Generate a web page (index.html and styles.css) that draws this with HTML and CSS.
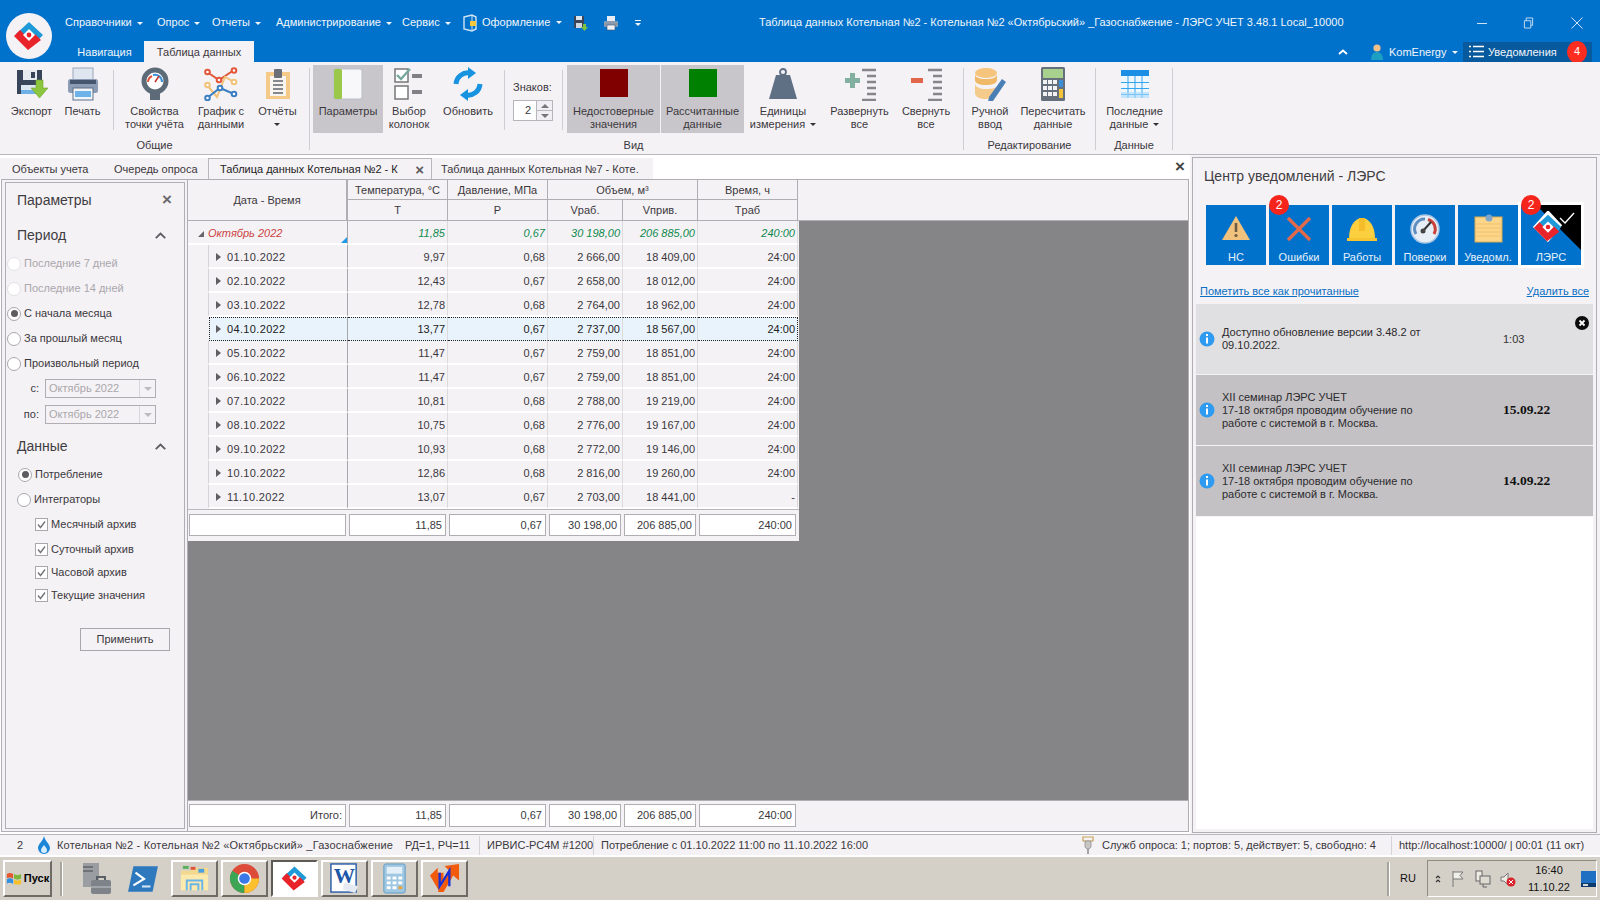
FILE: index.html
```html
<!DOCTYPE html>
<html lang="ru">
<head>
<meta charset="utf-8">
<title>ЛЭРС УЧЕТ</title>
<link rel="stylesheet" href="styles.css">
</head>
<body>
<svg class="defs" width="0" height="0">
  <symbol id="logo" viewBox="0 0 46 46">
    <polygon fill="#1f9ad9" points="23,9 37,22 30,29 23,22 16,28 10,21"/>
    <polygon fill="#e8232a" points="8,23 14,17 23,26 29,21 35,27 22,37"/>
    <polygon fill="#fff" points="23,16 29,22 23,28 17,22"/>
    <circle fill="#e8232a" cx="23" cy="22" r="2.4"/>
  </symbol>
  <symbol id="info" viewBox="0 0 16 16">
    <circle cx="8" cy="8" r="7.5" fill="#2f9bf0"/>
    <rect x="7" y="3" width="2" height="2" fill="#fff"/>
    <rect x="7" y="6.5" width="2" height="6" fill="#fff"/>
  </symbol>
</svg>

<header class="titlebar">
  <div class="logo-wrap"><svg class="logo" viewBox="0 0 46 46"><circle cx="23" cy="23" r="23" fill="#f5f2f6"/><use href="#logo" width="46" height="46"/></svg></div>
  <div class="title-main">
    <div class="title-top">
      <nav class="menu">
        <span class="m m1">Справочники <i class="ar"></i></span>
        <span class="m m2">Опрос <i class="ar"></i></span>
        <span class="m m3">Отчеты <i class="ar"></i></span>
        <span class="m m4">Администрирование <i class="ar"></i></span>
        <span class="m m5">Сервис <i class="ar"></i></span>
        <span class="m m6"><svg class="qa" viewBox="0 0 18 18"><path d="M3 3 L11 1 L15 3 V15 L11 17 L3 15 Z" fill="none" stroke="#cfe4f6" stroke-width="1.4"/><path d="M11 1 V17" stroke="#cfe4f6"/><rect x="9" y="7" width="6" height="5" fill="#f6c83c"/></svg>Оформление <i class="ar"></i></span>
        <svg class="qa qa-save" viewBox="0 0 16 16"><rect x="1" y="1" width="10" height="12" fill="#39465a"/><rect x="3" y="1" width="6" height="4" fill="#dfe6ee"/><rect x="3" y="8" width="6" height="5" fill="#cfd8e2"/><path d="M10 9h3v3h2l-3.500 4L8 12h2z" fill="#7fc241"/></svg>
        <svg class="qa qa-print" viewBox="0 0 16 16"><rect x="4" y="1" width="8" height="5" fill="#e8edf3"/><rect x="1" y="6" width="14" height="6" rx="1" fill="#8c9aae"/><rect x="4" y="10" width="8" height="5" fill="#eef3f8" stroke="#46566e" stroke-width=".6"/></svg>
        <span class="qa-more"><b></b><i class="ar ar-w"></i></span>
      </nav>
      <div class="app-title">Таблица данных Котельная №2 - Котельная №2 «Октябрьский» _Газоснабжение - ЛЭРС УЧЕТ 3.48.1 Local_10000</div>
      <div class="win-btns">
        <svg class="wb" viewBox="0 0 12 12"><path d="M1 6.500H11" stroke="#cfe3f5"/></svg>
        <svg class="wb wb2" viewBox="0 0 12 12"><path d="M1.500 3.500h7v8h-7zM3.500 3.500v-3h7v8h-2" fill="none" stroke="#cfe3f5"/></svg>
        <svg class="wb wb3" viewBox="0 0 12 12"><path d="M.5.500L11.500 11.500M11.500.500L.5 11.500" stroke="#cfe3f5"/></svg>
      </div>
    </div>
    <div class="title-tabs">
      <div class="rt">Навигация</div>
      <div class="rt rt-on">Таблица данных</div>
      <div class="title-right">
        <svg class="coll" viewBox="0 0 10 6"><path d="M1 5L5 1.500L9 5" fill="none" stroke="#fff" stroke-width="1.800"/></svg>
        <svg class="user" viewBox="0 0 14 18"><circle cx="7" cy="5" r="3.600" fill="#f2c08a"/><path d="M1 17C1 11 4 9 7 9s6 2 6 8z" fill="#1d9fc4"/></svg>
        <span class="u-name">KomEnergy <i class="ar"></i></span>
        <div class="notif-btn">
          <svg class="lst" viewBox="0 0 15 13"><path d="M0 1.500h2M4 1.500h11M0 6.500h2M4 6.500h11M0 11.500h2M4 11.500h11" stroke="#fff" stroke-width="1.400"/></svg>
          <span>Уведомления</span>
          <b class="badge">4</b>
        </div>
      </div>
    </div>
  </div>
</header>

<section class="ribbon">
  <div class="rg g1">
    <div class="btns">
      <div class="rb w-exp"><svg class="ic" viewBox="0 0 34 34"><path d="M2 3H27V27H2z" fill="#37445a"/><rect x="8" y="3" width="14" height="10" fill="#e6ebf1"/><rect x="16" y="5" width="4" height="6" fill="#37445a"/><rect x="6" y="18" width="17" height="9" fill="#dce6f0"/><rect x="6" y="23" width="17" height="4" fill="#6fb1e6"/><path d="M21 13h7v8h5L24.500 31 16 21h5z" fill="#8cc63f" stroke="#6fa32e" stroke-width=".6"/></svg><span>Экспорт</span></div>
      <div class="rb w-prn"><svg class="ic" viewBox="0 0 34 34"><rect x="7" y="1" width="20" height="12" fill="#dfe6f0" stroke="#9aa7ba"/><rect x="2" y="12" width="30" height="14" rx="2.500" fill="#8c9cb4"/><rect x="4" y="13" width="26" height="4" fill="#46566e"/><rect x="7" y="21" width="20" height="12" fill="#f2f5f8" stroke="#5e6f88"/><rect x="9" y="24" width="16" height="6" fill="#6db3ea"/></svg><span>Печать</span></div>
    </div>
    <div class="rsep s1"></div>
    <div class="btns">
      <div class="rb w-prop"><svg class="ic" viewBox="0 0 34 34"><circle cx="17" cy="14" r="11" fill="#fff" stroke="#5d6b79" stroke-width="5"/><path d="M10 15a7 7 0 0 1 4-6" fill="none" stroke="#e0533b" stroke-width="2"/><path d="M15 8a7 7 0 0 1 9 7" fill="none" stroke="#3a8fd9" stroke-width="2"/><path d="M17 15L21 9" stroke="#c6312a" stroke-width="1.500"/><rect x="12" y="26" width="10" height="7" fill="#5d6b79"/></svg><span>Свойства<br>точки учёта</span></div>
      <div class="rb w-chart"><svg class="ic" viewBox="0 0 34 34"><path d="M3 5L15 13L30 3" fill="none" stroke="#e2573a" stroke-width="2"/><path d="M3 18L13 30L21 10L30 15" fill="none" stroke="#f0c27a" stroke-width="2"/><path d="M3 31L16 21L30 27" fill="none" stroke="#3a7fc2" stroke-width="2"/><g fill="#fff" stroke-width="2"><g stroke="#e2573a"><circle cx="3.500" cy="5" r="2.300"/><circle cx="15" cy="13" r="2.300"/><circle cx="30" cy="3.500" r="2.300"/></g><g stroke="#f0c27a"><circle cx="3.500" cy="18" r="2.300"/><circle cx="30" cy="15" r="2.300"/></g><g stroke="#3a7fc2"><circle cx="3.500" cy="31" r="2.300"/><circle cx="16" cy="21" r="2.300"/><circle cx="30" cy="27" r="2.300"/></g></g></svg><span>График с<br>данными</span></div>
      <div class="rb w-rep"><svg class="ic" viewBox="0 0 34 34"><rect x="5" y="5" width="24" height="27" fill="#f5c987"/><rect x="9" y="9" width="16" height="20" fill="#f7f4f0"/><rect x="13" y="2" width="8" height="9" rx="1" fill="#6b6f78"/><path d="M12 14h10M12 18h10M12 22h10M12 26h10" stroke="#85888f" stroke-width="1.800"/></svg><span>Отчёты<br><i class="ar ar-d"></i></span></div>
    </div>
    <div class="glabel">Общие</div>
  </div>
  <div class="rsep s2"></div>
  <div class="rg g2">
    <div class="btns">
      <div class="rb rb-on w-par"><svg class="ic" viewBox="0 0 34 34"><rect x="3" y="2" width="28" height="30" rx="2" fill="#f8f8fb" stroke="#b8c0cb"/><rect x="3" y="2" width="8" height="30" rx="1.500" fill="#9bc84a"/></svg><span>Параметры</span></div>
      <div class="rb w-col"><svg class="ic" viewBox="0 0 34 34"><rect x="3" y="2" width="13" height="13" fill="#fff" stroke="#777" stroke-width="1.500"/><path d="M5 8L9 12L18 2" fill="none" stroke="#76a89e" stroke-width="2.400"/><rect x="3" y="19" width="13" height="13" fill="#fff" stroke="#777" stroke-width="1.500"/><rect x="20" y="7" width="10" height="4" fill="#818185"/><rect x="20" y="23" width="10" height="4" fill="#818185"/></svg><span>Выбор<br>колонок</span></div>
      <div class="rb w-upd"><svg class="ic" viewBox="0 0 34 34"><path d="M5 17A12 12 0 0 1 19 6" fill="none" stroke="#1793e0" stroke-width="5"/><path d="M17 0l8 6-8 6z" fill="#1793e0"/><path d="M29 17A12 12 0 0 1 15 28" fill="none" stroke="#1793e0" stroke-width="5"/><path d="M17 22l-8 6 8 6z" fill="#1793e0"/></svg><span>Обновить</span></div>
      <div class="rsep s3"></div>
      <div class="digits">
        <label class="dl">Знаков:</label>
        <div class="spin"><span class="sv">2</span><div class="sb"><i class="up"></i><i class="dn"></i></div></div>
      </div>
      <div class="rsep s4"></div>
      <div class="rb rb-on w-bad"><div class="sq sq-r"></div><span>Недостоверные<br>значения</span></div>
      <div class="rb rb-on w-calc"><div class="sq sq-g"></div><span>Рассчитанные<br>данные</span></div>
      <div class="rb w-unit"><svg class="ic" viewBox="0 0 34 34"><circle cx="17" cy="5" r="3" fill="none" stroke="#5f6f84" stroke-width="1.800"/><path d="M10 8H24L31 32H3z" fill="#5f6f84"/></svg><span>Единицы<br>измерения <i class="ar ar-k"></i></span></div>
      <div class="rb w-exp2"><svg class="ic" viewBox="0 0 34 34"><path d="M2 11h5V6h5v5h5v5h-5v5H7v-5H2z" fill="#82b0a0"/><path d="M19 3h14M24 9h9M24 15h9M24 21h9M24 27h9M19 33h14" stroke="#85858a" stroke-width="2.300"/></svg><span>Развернуть<br>все</span></div>
      <div class="rb w-col2"><svg class="ic" viewBox="0 0 34 34"><rect x="2" y="11" width="12" height="5" fill="#e2674a"/><path d="M19 3h14M24 9h9M24 15h9M24 21h9M24 27h9M19 33h14" stroke="#85858a" stroke-width="2.300"/></svg><span>Свернуть<br>все</span></div>
    </div>
    <div class="glabel gl-view">Вид</div>
  </div>
  <div class="rsep s5"></div>
  <div class="rg g3">
    <div class="btns">
      <div class="rb w-hand"><svg class="ic" viewBox="0 0 34 34"><ellipse cx="13" cy="6" rx="11" ry="5" fill="#f5c57e"/><path d="M2 7V13C2 16 6 18 13 18S24 16 24 13V7C24 10 20 12 13 12S2 10 2 7z" fill="#f0b968"/><path d="M2 16V26C2 30 7 32 13 32c3 0 5-1 6-2l8-12c-3 3-8 4-14 4S2 20 2 16z" fill="#f5cb8c"/><path d="M29 12l4 3-13 19-5 1 1-5z" fill="#4a7fb5"/></svg><span>Ручной<br>ввод</span></div>
      <div class="rb w-rec"><svg class="ic" viewBox="0 0 34 34"><rect x="5" y="0" width="24" height="34" rx="1.500" fill="#66707c"/><rect x="7" y="2" width="20" height="9" fill="#a9d18e"/><g fill="#f2f2f2"><rect x="7" y="13" width="4" height="4"/><rect x="12" y="13" width="4" height="4"/><rect x="17" y="13" width="4" height="4"/><rect x="7" y="19" width="4" height="4"/><rect x="12" y="19" width="4" height="4"/><rect x="17" y="19" width="4" height="4"/><rect x="7" y="25" width="4" height="4"/><rect x="12" y="25" width="4" height="4"/><rect x="17" y="25" width="4" height="4"/></g><rect x="23" y="13" width="4" height="7" fill="#3a8fd9"/><rect x="23" y="22" width="4" height="9" fill="#f3c43a"/></svg><span>Пересчитать<br>данные</span></div>
    </div>
    <div class="glabel">Редактирование</div>
  </div>
  <div class="rsep s5"></div>
  <div class="rg g4">
    <div class="btns">
      <div class="rb w-last"><svg class="ic" viewBox="0 0 34 34"><rect x="3" y="3" width="28" height="28" fill="#eef7fe"/><rect x="3" y="3" width="28" height="6" fill="#1a8fe3"/><path d="M3 15.500H31M3 21.500H31M3 27.500H31M10 9V31M17 9V31M24 9V31" stroke="#35a4ee"/><rect x="3" y="25" width="28" height="6" fill="#a8d9fb" opacity=".6"/></svg><span>Последние<br>данные <i class="ar ar-k"></i></span></div>
    </div>
    <div class="glabel">Данные</div>
  </div>
  <div class="rsep s6"></div>
</section>

<main class="work">
  <div class="docs">
    <div class="doc-tabs">
      <div class="dt dt-a">Объекты учета</div>
      <div class="dt dt-b">Очередь опроса</div>
      <div class="dt dt-on"><span>Таблица данных Котельная №2 - К</span><b class="dx">×</b></div>
      <div class="dt dt-c">Таблица данных Котельная №7 - Коте.</div>
      <b class="dclose">×</b>
    </div>
    <div class="frame">
      <aside class="params">
        <div class="ph h-top"><span>Параметры</span><b class="px">×</b></div>
        <div class="ph h-per"><span>Период</span><svg class="chev" viewBox="0 0 10 6"><path d="M.7 5.300L5 1.200L9.300 5.300" fill="none" stroke="#5c5a5e" stroke-width="1.600"/></svg></div>
        <div class="r dis"><i class="rd"></i>Последние 7 дней</div>
        <div class="r dis"><i class="rd"></i>Последние 14 дней</div>
        <div class="r"><i class="rd rd-on"></i>С начала месяца</div>
        <div class="r"><i class="rd"></i>За прошлый месяц</div>
        <div class="r"><i class="rd"></i>Произвольный период</div>
        <div class="dr"><label>с:</label><div class="combo"><span>Октябрь 2022</span><i></i></div></div>
        <div class="dr"><label>по:</label><div class="combo"><span>Октябрь 2022</span><i></i></div></div>
        <div class="ph h-dat"><span>Данные</span><svg class="chev" viewBox="0 0 10 6"><path d="M.7 5.300L5 1.200L9.300 5.300" fill="none" stroke="#5c5a5e" stroke-width="1.600"/></svg></div>
        <div class="r r-in"><i class="rd rd-on"></i>Потребление</div>
        <div class="r r-in2"><i class="rd"></i>Интеграторы</div>
        <div class="c c1"><svg class="cb" viewBox="0 0 13 13"><rect x=".5" y=".5" width="12" height="12" fill="#fff" stroke="#a9a7ab"/><path d="M3 6.500L5.500 9.500L10 3.500" fill="none" stroke="#77757a" stroke-width="1.400"/></svg>Месячный архив</div>
        <div class="c c2"><svg class="cb" viewBox="0 0 13 13"><rect x=".5" y=".5" width="12" height="12" fill="#fff" stroke="#a9a7ab"/><path d="M3 6.500L5.500 9.500L10 3.500" fill="none" stroke="#77757a" stroke-width="1.400"/></svg>Суточный архив</div>
        <div class="c c3"><svg class="cb" viewBox="0 0 13 13"><rect x=".5" y=".5" width="12" height="12" fill="#fff" stroke="#a9a7ab"/><path d="M3 6.500L5.500 9.500L10 3.500" fill="none" stroke="#77757a" stroke-width="1.400"/></svg>Часовой архив</div>
        <div class="c c3"><svg class="cb" viewBox="0 0 13 13"><rect x=".5" y=".5" width="12" height="12" fill="#fff" stroke="#a9a7ab"/><path d="M3 6.500L5.500 9.500L10 3.500" fill="none" stroke="#77757a" stroke-width="1.400"/></svg>Текущие значения</div>
        <button class="apply" type="button">Применить</button>
      </aside>
      <div class="gridbox">
        <div class="hdr">
          <div class="hc h-date">Дата - Время</div>
          <div class="hc">Температура, °C</div>
          <div class="hc">Давление, МПа</div>
          <div class="hc h-vol">Объем, м³</div>
          <div class="hc">Время, ч</div>
          <div class="hc">T</div>
          <div class="hc">P</div>
          <div class="hc">Vраб.</div>
          <div class="hc">Vприв.</div>
          <div class="hc">Tраб</div>
        </div>
        <div class="gbody">
          <div class="rows">
            <div class="row grp"><div class="cd"><i class="tw"></i><span>Октябрь 2022</span><i class="corner"></i></div><div>11,85</div><div>0,67</div><div>30 198,00</div><div>206 885,00</div><div>240:00</div></div>
            <div class="row"><div class="cd"><i class="ex"></i>01.10.2022</div><div>9,97</div><div>0,68</div><div>2 666,00</div><div>18 409,00</div><div>24:00</div></div>
            <div class="row"><div class="cd"><i class="ex"></i>02.10.2022</div><div>12,43</div><div>0,67</div><div>2 658,00</div><div>18 012,00</div><div>24:00</div></div>
            <div class="row"><div class="cd"><i class="ex"></i>03.10.2022</div><div>12,78</div><div>0,68</div><div>2 764,00</div><div>18 962,00</div><div>24:00</div></div>
            <div class="row sel"><div class="cd"><i class="ex"></i>04.10.2022</div><div>13,77</div><div>0,67</div><div>2 737,00</div><div>18 567,00</div><div>24:00</div></div>
            <div class="row"><div class="cd"><i class="ex"></i>05.10.2022</div><div>11,47</div><div>0,67</div><div>2 759,00</div><div>18 851,00</div><div>24:00</div></div>
            <div class="row"><div class="cd"><i class="ex"></i>06.10.2022</div><div>11,47</div><div>0,67</div><div>2 759,00</div><div>18 851,00</div><div>24:00</div></div>
            <div class="row"><div class="cd"><i class="ex"></i>07.10.2022</div><div>10,81</div><div>0,68</div><div>2 788,00</div><div>19 219,00</div><div>24:00</div></div>
            <div class="row"><div class="cd"><i class="ex"></i>08.10.2022</div><div>10,75</div><div>0,68</div><div>2 776,00</div><div>19 167,00</div><div>24:00</div></div>
            <div class="row"><div class="cd"><i class="ex"></i>09.10.2022</div><div>10,93</div><div>0,68</div><div>2 772,00</div><div>19 146,00</div><div>24:00</div></div>
            <div class="row"><div class="cd"><i class="ex"></i>10.10.2022</div><div>12,86</div><div>0,68</div><div>2 816,00</div><div>19 260,00</div><div>24:00</div></div>
            <div class="row"><div class="cd"><i class="ex"></i>11.10.2022</div><div>13,07</div><div>0,67</div><div>2 703,00</div><div>18 441,00</div><div>-</div></div>
            <div class="sum"><div></div><div>11,85</div><div>0,67</div><div>30 198,00</div><div>206 885,00</div><div>240:00</div></div>
          </div>
        </div>
        <div class="foot"><div class="sum"><div>Итого:</div><div>11,85</div><div>0,67</div><div>30 198,00</div><div>206 885,00</div><div>240:00</div></div></div>
      </div>
    </div>
  </div>

  <aside class="center">
    <div class="ct">Центр уведомлений - ЛЭРС</div>
    <div class="tiles">
      <div class="tile"><svg class="ti" viewBox="0 0 30 30"><path d="M15 2L29 26H1z" fill="#f0c27e"/><rect x="13.700" y="9" width="2.600" height="9" fill="#6d5c44"/><circle cx="15" cy="21.500" r="1.600" fill="#6d5c44"/></svg><span>НС</span></div>
      <div class="tile"><svg class="ti" viewBox="0 0 30 30"><path d="M4 4L26 26M26 4L4 26" stroke="#e2694a" stroke-width="3.200"/></svg><span>Ошибки</span><b class="tb">2</b></div>
      <div class="tile"><svg class="ti" viewBox="0 0 30 30"><path d="M2 24C2 12 8 4 15 4s13 8 13 20z" fill="#fbcf3d"/><path d="M12 4h6v13h-6z" fill="#f5bd2a"/><path d="M-1 24h32v3H-1z" fill="#f6c531"/></svg><span>Работы</span></div>
      <div class="tile"><svg class="ti" viewBox="0 0 30 30"><circle cx="15" cy="15" r="14" fill="#e8eef5" stroke="#a9c6e4" stroke-width="1.500"/><path d="M6 20A10 10 0 0 1 15 5" fill="none" stroke="#5e8fc0" stroke-width="3"/><path d="M18 5.500A10 10 0 0 1 24 20" fill="none" stroke="#c9423a" stroke-width="3"/><path d="M13 17L21 8" stroke="#333" stroke-width="2"/><circle cx="13" cy="17" r="2.500" fill="#444"/></svg><span>Поверки</span></div>
      <div class="tile"><svg class="ti" viewBox="0 0 30 30"><rect x="2" y="3" width="27" height="25" fill="#fbd68a" stroke="#d9a850"/><path d="M3 10h25M3 14h25M3 18h25M3 22h25" stroke="#f3c06a"/><circle cx="16" cy="4" r="3.500" fill="#7ea6cc"/></svg><span>Уведомл.</span></div>
      <div class="tile tile-on"><i class="fold"></i><svg class="tick" viewBox="0 0 16 12"><path d="M1 6L6 11L15 1" fill="none" stroke="#fff" stroke-width="1.400"/></svg><svg class="ti tl" viewBox="5 6 36 34"><polygon fill="#fff" points="23,4 38,20 23,38 7,22"/><use href="#logo" width="46" height="46"/></svg><span>ЛЭРС</span><b class="tb">2</b></div>
    </div>
    <div class="links"><a href="#">Пометить все как прочитанные</a><a href="#">Удалить все</a></div>
    <div class="msg m-new">
      <svg class="mi"><use href="#info"/></svg>
      <div class="mt">Доступно обновление версии 3.48.2 от<br>09.10.2022.</div>
      <div class="md md-n">1:03</div>
      <svg class="mx" viewBox="0 0 14 14"><circle cx="7" cy="7" r="7" fill="#0c0c0c"/><path d="M4.500 4.500L9.500 9.500M9.500 4.500L4.500 9.500" stroke="#fff" stroke-width="1.800"/></svg>
    </div>
    <div class="msg">
      <svg class="mi"><use href="#info"/></svg>
      <div class="mt">XII семинар ЛЭРС УЧЕТ<br>17-18 октября проводим обучение по<br>работе с системой в г. Москва.</div>
      <div class="md">15.09.22</div>
    </div>
    <div class="msg">
      <svg class="mi"><use href="#info"/></svg>
      <div class="mt">XII семинар ЛЭРС УЧЕТ<br>17-18 октября проводим обучение по<br>работе с системой в г. Москва.</div>
      <div class="md">14.09.22</div>
    </div>
    <div class="c-rest"></div>
  </aside>
</main>

<footer class="status">
  <span class="st-n">2</span>
  <svg class="flame" viewBox="0 0 14 18"><path d="M7 0C8 5 13 8 13 12a6 6 0 0 1-12 0C1 8 6 5 7 0z" fill="#1b86d8"/><path d="M7 9c1 2 3 3 3 5a3 3 0 0 1-6 0c0-2 2-3 3-5z" fill="#d6edfb"/></svg>
  <span class="st-a">Котельная №2 - Котельная №2 «Октябрьский» _Газоснабжение</span>
  <span class="st-b">РД=1, РЧ=11</span>
  <span class="st-c">ИРВИС-РС4М #1200</span>
  <span class="st-d">Потребление с 01.10.2022 11:00 по 11.10.2022 16:00</span>
  <svg class="pin" viewBox="0 0 12 18"><path d="M1 1h10v4H1z" fill="none" stroke="#c9a15a" stroke-width="1.200"/><path d="M3 5h6v6l-2 2H5l-2-2z" fill="#c8c6c2" stroke="#8f8f8f" stroke-width=".8"/><path d="M6 13v5" stroke="#888" stroke-width="1.500"/></svg>
  <span class="st-e">Служб опроса: 1; портов: 5, действует: 5, свободно: 4</span>
  <span class="st-f">http://localhost:10000/ | 00:01 (11 окт)</span>
</footer>

<nav class="taskbar">
  <div class="tbb start"><svg class="win" viewBox="0 0 18 16"><path d="M1 3c3-2 5-1 7 0v5C6 7 3 6 1 8z" fill="#e4572e"/><path d="M9 3c2 1 5 2 8 0v5c-3 2-6 1-8 0z" fill="#7fb53c"/><path d="M1 9c2-2 5-1 7 0v5c-2-1-5-2-7 0z" fill="#2f8fe0"/><path d="M9 9c2 1 5 2 8 0v5c-3 2-6 1-8 0z" fill="#f5c02c"/></svg><b>Пуск</b></div>
  <div class="gripper"></div>
  <div class="qi qi1"><svg viewBox="0 0 32 32"><rect x="2" y="0" width="16" height="24" fill="#9a9ea3"/><path d="M2 4h10M2 8h10" stroke="#44484e"/><rect x="10" y="17" width="20" height="14" rx="2" fill="#7d8389"/><path d="M16 17v-3h8v3" fill="none" stroke="#5a5f65" stroke-width="2"/><path d="M10 24h20" stroke="#c3c7cb"/></svg></div>
  <div class="qi qi2"><svg viewBox="0 0 30 26"><path d="M6 1H29L24 25H1z" fill="#2e79bd"/><path d="M8 7L16 13L6 19" fill="none" stroke="#fff" stroke-width="2"/><path d="M14 20h8" stroke="#cfe3f5" stroke-width="2"/></svg></div>
  <div class="tbb app"><svg viewBox="0 0 32 32"><path d="M2 8H12L14 5H30V28H2z" fill="#f3d990"/><path d="M2 12H30V28H2z" fill="#fbe9ae"/><rect x="4" y="3" width="6" height="3" fill="#58b05a"/><rect x="12" y="4" width="5" height="3" fill="#e0533b"/><rect x="20" y="6" width="6" height="4" fill="#4a9fe0"/><path d="M8 28V18H24V28M12 28V22H20V28" fill="none" stroke="#6ab5e8" stroke-width="2"/></svg></div>
  <div class="tbb app"><svg viewBox="0 0 32 32"><circle cx="16" cy="16" r="15" fill="#dd4b39"/><path d="M16 16L3 23.500A15 15 0 0 0 16 31z" fill="#3aa757"/><path d="M3 23.500A15 15 0 0 1 3.500 8L16 16z" fill="#3aa757"/><path d="M16 16H31A15 15 0 0 1 16 31z" fill="#fbc02d"/><circle cx="16" cy="16" r="7" fill="#fff"/><circle cx="16" cy="16" r="5.500" fill="#3b78e7"/></svg></div>
  <div class="tbb app on"><svg viewBox="5 6 36 34"><use href="#logo" width="46" height="46"/></svg></div>
  <div class="tbb app"><svg viewBox="0 0 32 32"><rect x="2" y="1" width="26" height="29" fill="#fff" stroke="#2a5ea8" stroke-width="1.500"/><text class="wtxt" x="5" y="21">W</text><path d="M16 20l14 4-3 7-13-4z" fill="#e6ebf3"/></svg></div>
  <div class="tbb app"><svg viewBox="0 0 32 32"><rect x="5" y="1" width="22" height="30" rx="2" fill="#9fc7e2" stroke="#5f9bc4"/><rect x="8" y="4" width="16" height="7" fill="#e4f0f7"/><g fill="#fff"><rect x="8" y="14" width="4" height="3"/><rect x="14" y="14" width="4" height="3"/><rect x="20" y="14" width="4" height="3"/><rect x="8" y="19" width="4" height="3"/><rect x="14" y="19" width="4" height="3"/><rect x="20" y="19" width="4" height="3"/><rect x="8" y="24" width="4" height="3"/><rect x="14" y="24" width="4" height="3"/></g><rect x="20" y="24" width="4" height="3" fill="#e8a33a"/></svg></div>
  <div class="tbb app"><svg viewBox="0 0 32 32"><path d="M1 13L9 5v5h6v10l-4 0v10z" fill="#f25a0c"/><path d="M31 1v17l-6-5L15 30H9l12-22-5-5z" fill="#f25a0c"/><path d="M11 10V24L21 8V24" fill="none" stroke="#1730d8" stroke-width="2.400"/></svg></div>
  <div class="tb-fill"></div>
  <div class="gripper g2b"></div>
  <div class="lang">RU</div>
  <div class="tray">
    <svg class="tr-a" viewBox="0 0 6 10"><path d="M1 4L3 2L5 4M1 8L3 6L5 8" fill="none" stroke="#333" stroke-width="1.200"/></svg>
    <svg class="tr-i" viewBox="0 0 16 18"><path d="M3 1V17M3 2H13L10 5.500L13 9H3" fill="#f0eee8" stroke="#777"/></svg>
    <svg class="tr-i" viewBox="0 0 16 18"><rect x="1" y="1" width="6" height="10" fill="#efece4" stroke="#666"/><rect x="5" y="6" width="10" height="8" fill="#dedbd2" stroke="#666"/><path d="M8 14v3h4" stroke="#666" fill="none"/></svg>
    <svg class="tr-i" viewBox="0 0 16 18"><path d="M1 7H4L8 3V15L4 11H1z" fill="#efece4" stroke="#777"/><circle cx="11" cy="12" r="4.500" fill="#d8242a"/><path d="M9 10l4 4M13 10l-4 4" stroke="#fff"/></svg>
    <div class="clock"><div>16:40</div><div>11.10.22</div></div>
    <svg class="tr-d" viewBox="0 0 15 16"><rect width="15" height="16" fill="#1f6fc2"/><rect y="12" width="15" height="4" fill="#0d3a6c"/><rect x="2" y="13" width="5" height="2" fill="#d9d9d9"/></svg>
  </div>
</nav>
</body>
</html>
```

FILE: styles.css
```css
* { box-sizing: border-box; }
html, body { margin: 0; padding: 0; }
body {
  width: 1600px; height: 900px; overflow: hidden;
  display: flex; flex-direction: column;
  font: 11px/13px "Liberation Sans", Arial, sans-serif;
  color: #3a383c; background: #f5f2f6;
}
i, b { font-style: normal; }
.defs { position: absolute; }

.titlebar { height: 62px; background: #0072cc; color: #f2f6fa; display: flex; flex: none; }
.logo-wrap { width: 65px; flex: none; padding: 13px 0 0 6px; }
.logo { display: block; width: 46px; height: 46px; }
.title-main { flex: 1; display: flex; flex-direction: column; min-width: 0; }
.title-top { height: 41px; display: flex; align-items: flex-start; padding-top: 16px; }
.menu { display: flex; align-items: center; width: 694px; flex: none; height: 13px; }
.m { white-space: nowrap; }
.m1 { width: 92px; } .m2 { width: 55px; } .m3 { width: 64px; } .m4 { width: 126px; } .m5 { width: 59px; }
.m6 { width: 112px; display: flex; align-items: center; }
.m6 .ar { margin-left: 6px; }
.ar { display: inline-block; width: 0; height: 0; border: 3px solid transparent; border-top-color: #f2f6fa; border-bottom: 0; margin-left: 2px; vertical-align: middle; }
.ar-k { border-top-color: #333; }
.ar-d { border-top-color: #333; margin: 0; }
.qa { width: 16px; height: 16px; flex: none; }
.m6 .qa { width: 18px; height: 18px; margin-right: 3px; }
.qa-save { margin-right: 14px; }
.qa-print { margin-right: 15px; }
.qa-more { display: flex; flex-direction: column; gap: 2px; align-items: center; width: 8px; }
.qa-more b { width: 6px; height: 1px; background: #f2f6fa; }
.ar-w { margin: 0; }
.app-title { width: 598px; flex: none; white-space: nowrap; }
.win-btns { flex: 1; display: flex; padding-left: 119px; }
.wb { width: 12px; height: 12px; margin-top: 1px; }
.wb2 { margin-left: 35px; width: 11px; height: 12px; }
.wb3 { margin-left: 37px; }
.title-tabs { height: 21px; display: flex; align-items: stretch; }
.rt { display: flex; align-items: center; justify-content: center; height: 21px; padding-top: 2px; }
.rt:first-child { width: 79px; }
.rt-on { width: 110px; background: #f5f2f6; color: #3a383c; }
.title-right { margin-left: auto; width: 262px; display: flex; align-items: center; padding-right: 8px; }
.coll { width: 10px; height: 6px; flex: none; }
.user { width: 14px; height: 18px; flex: none; margin-left: 22px; }
.u-name { margin-left: 5px; width: 74px; white-space: nowrap; flex: none; padding-top: 1px; }
.notif-btn { flex: none; width: 129px; height: 20px; background: #085a9e; display: flex; align-items: center; padding-left: 6px; position: relative; }
.notif-btn span { padding-top: 1px; }
.lst { width: 15px; height: 13px; margin-right: 4px; }
.badge { position: absolute; right: 5px; top: -1px; width: 20px; height: 22px; border-radius: 50%; background: #ff2d20; color: #fff; font-weight: 400; font-size: 11px; display: flex; align-items: center; justify-content: center; }

.ribbon { height: 93px; flex: none; background: #f5f2f6; border-bottom: 1px solid #b9b7bb; display: flex; align-items: flex-start; padding-top: 3px; position: relative; }
.rg { display: flex; flex-wrap: wrap; align-content: flex-start; flex: none; }
.btns { display: flex; align-items: flex-start; height: 71px; }
.g1 { width: 309px; } .g2 { width: 651px; margin-left: 2px; } .g3 { width: 131px; } .g4 { width: 76px; }
.g1 .btns:first-child { width: 113px; padding-left: 4px; }
.g2 .btns { width: 651px; padding-left: 1px; }
.g3 .btns { width: 131px; } .g4 .btns { width: 75px; padding-left: 2px; }
.glabel { flex: 0 0 100%; text-align: center; height: 14px; margin-top: 3px; }
.gl-view { padding-right: 8px; }
.rb { display: flex; flex-direction: column; align-items: center; height: 68px; padding-top: 2px; text-align: center; flex: none; white-space: nowrap; }
.rb span { display: block; margin-top: 4px; }
.rb .ar-k, .rb .ar-d { vertical-align: 2px; }
.ic { width: 34px; height: 34px; display: block; flex: none; }
.rb-on { background: #c9c6cb; }
.sq { width: 28px; height: 28px; margin: 2px 0 4px; flex: none; }
.sq-r { background: #800000; } .sq-g { background: #008000; }
.rsep { width: 1px; background: #cfcdd1; flex: none; }
.s1 { height: 60px; margin-top: 5px; }
.s2 { height: 82px; margin-top: 3px; }
.s3, .s4 { height: 60px; margin-top: 5px; }
.s5, .s6 { height: 82px; margin-top: 3px; }
.w-exp { width: 55px; } .w-prn { width: 47px; }
.w-prop { width: 81px; margin-right: 1px; } .w-chart { width: 50px; } .w-rep { width: 63px; }
.g1 .btns + .rsep + .btns { width: 195px; padding-left: 0; }
.w-par { width: 70px; margin-right: 3px; } .w-col { width: 46px; } .w-upd { width: 72px; }
.digits { width: 57px; flex: none; padding: 16px 0 0 8px; }
.dl { display: block; white-space: nowrap; }
.spin { display: flex; width: 40px; height: 21px; margin-top: 6px; border: 1px solid #b8b6ba; background: #fff; }
.sv { flex: 1; text-align: right; padding: 3px 5px 0 0; }
.sb { width: 16px; border-left: 1px solid #b8b6ba; display: flex; flex-direction: column; }
.sb i { flex: 1; display: flex; align-items: center; justify-content: center; background: #f1eff3; }
.sb i::after { content: ""; border: 4px solid transparent; }
.up::after { border-bottom-color: #77757a !important; border-top: 0 !important; }
.dn { border-top: 1px solid #b8b6ba; }
.dn::after { border-top-color: #77757a !important; border-bottom: 0 !important; }
.s4 { margin-right: 4px; }
.w-bad { width: 93px; margin-right: 1px; } .w-calc { width: 83px; }
.w-unit { width: 78px; } .w-exp2 { width: 75px; } .w-col2 { width: 58px; }
.g3 .w-hand { width: 52px; } .g3 .w-rec { width: 74px; }
.g4 .w-last { width: 73px; }

.work { height: 679px; flex: none; display: flex; min-height: 0; }
.docs { width: 1190px; flex: none; display: flex; flex-direction: column; background: #fff; }
.doc-tabs { height: 24px; display: flex; align-items: flex-end; flex: none; position: relative; background: #fff; }
.dt { height: 21px; background: #f5f2f6; display: flex; align-items: center; white-space: nowrap; padding-top: 1px; }
.dt-a { width: 114px; padding-left: 12px; }
.dt-b { width: 94px; }
.dt-on { width: 224px; padding: 0 7px 0 11px; border: 1px solid #b9b7bb; border-bottom: 0; justify-content: space-between; color: #222; }
.dt-c { width: 221px; padding-left: 9px; }
.dx { color: #5b595d; font-size: 15px; font-weight: 700; }
.dclose { position: absolute; right: 5px; top: 3px; font-size: 17px; line-height: 17px; color: #444; font-weight: 700; }
.frame { flex: 1; margin: 0 1px 2px; border: 1px solid #b0aeb2; background: #f5f2f6; display: flex; min-height: 0; padding: 2px 0 0 3px; }
.params { width: 180px; flex: none; border: 1px solid #b0aeb2; margin-bottom: 2px; display: flex; flex-direction: column; position: relative; }
.ph { font-size: 14px; line-height: 18px; font-weight: 400; padding: 0 0 0 11px; display: flex; align-items: center; justify-content: space-between; color: #3f3d41; flex: none; }
.h-top { margin-top: 8px; padding-right: 12px; }
.px { font-size: 17px; font-weight: 700; color: #6b696d; }
.h-per { margin-top: 17px; padding-right: 18px; }
.h-dat { margin-top: 13px; padding-right: 18px; }
.chev { width: 11px; height: 7px; }
.r { height: 25px; display: flex; align-items: center; padding-left: 1px; flex: none; white-space: nowrap; }
.h-per + .r { margin-top: 7px; }
.rd { width: 14px; height: 14px; border: 1px solid #aaa8ac; border-radius: 50%; background: #fff; margin-right: 3px; flex: none; position: relative; }
.rd-on::after { content: ""; position: absolute; left: 2.500px; top: 2.500px; width: 7px; height: 7px; border-radius: 50%; background: #5e5c60; }
.dis { color: #a9a7ab; } .dis .rd { border-color: #e2e0e4; }
.dr { display: flex; align-items: center; height: 19px; flex: none; margin-top: 7px; }
.r + .dr { margin-top: 3px; }
.dr label { width: 33px; text-align: right; margin-right: 6px; }
.combo { width: 111px; height: 19px; border: 1px solid #b0aeb2; display: flex; align-items: center; color: #a9a7ab; padding-left: 3px; }
.combo span { flex: 1; }
.combo i { width: 16px; height: 17px; border-left: 1px solid #d8d6da; display: flex; align-items: center; justify-content: center; }
.combo i::after { content: ""; border: 4px solid transparent; border-top-color: #bdbbbf; border-bottom: 0; }
.r-in { padding-left: 12px; margin-top: 7px; }
.r-in2 { padding-left: 11px; }
.c { display: flex; align-items: center; padding-left: 29px; flex: none; white-space: nowrap; }
.c1 { height: 25px; } .c2 { height: 24px; } .c3 { height: 23px; }
.cb { width: 13px; height: 13px; margin-right: 3px; flex: none; }
.apply { position: absolute; left: 74px; top: 445px; width: 90px; height: 23px; border: 1px solid #a9a7ab; background: #f5f2f6; color: #3a383c; font: inherit; padding: 0; }

.gridbox { flex: 1; margin: -2px 0 0 2px; display: flex; flex-direction: column; min-width: 0; border-left: 1px solid #b0aeb2; }
.hdr, .row, .sum { display: grid; grid-template-columns: 160px 100px 100px 75px 75px 100px; }
.hdr { height: 41px; grid-template-rows: 20px 20px; flex: none; border-bottom: 1px solid #b0aeb2; }
.hc { display: flex; align-items: center; justify-content: center; border-right: 1px solid #b0aeb2; border-bottom: 1px solid #b0aeb2; padding-top: 1px; }
.hc:nth-child(n+6) { border-bottom: 0; padding-top: 0; }
.h-date { grid-row: span 2; border-bottom: 0; border-right-width: 2px; padding-top: 0; }
.h-vol { grid-column: span 2; }
.gbody { flex: 1; background: #858487; min-height: 0; }
.rows { width: 611px; background: #f5f2f6; }
.row { height: 24px; text-align: right; align-items: stretch; }
.row > div { border-right: 1px solid #dcdadd; border-bottom: 2px solid #fff; padding: 6px 2px 0 0; }
.row > .cd { border-right: 1px solid #a9a7ab; margin-left: 20px; border-left: 1px solid #d5d3d7; text-align: left; padding: 6px 0 0 7px; display: flex; align-items: flex-start; position: relative; letter-spacing: .35px; }
.ex { width: 0; height: 0; border: 4px solid transparent; border-left: 5px solid #5f5d61; border-right: 0; margin: 2px 6px 0 0; flex: none; }
.grp { color: #0f8a4e; font-style: italic; }
.grp > .cd { margin-left: 0; border-left: 0; padding-left: 10px; color: #cb4343; letter-spacing: 0; }
.tw { width: 0; height: 0; border-left: 6px solid transparent; border-bottom: 6px solid #66646a; margin: 4px 4px 0 0; flex: none; }
.corner { position: absolute; right: 0; bottom: 0; width: 0; height: 0; border-left: 6px solid transparent; border-bottom: 6px solid #1e9ae8; }
.sel > div { background: #e9f3fc; color: #222; border-top: 1px dotted #222; border-bottom: 1px dotted #222; padding-top: 5px; border-right: 1px solid #dcdadd; }
.row.sel > .cd { margin-left: 21px; border-left: 1px dotted #222; padding-top: 5px; padding-left: 6px; }
.sel > div:last-child { border-right: 1px dotted #222; }
.sum { height: 32px; padding: 4px 0 5px; text-align: right; border-top: 1px solid #b9b7bb; background: #f5f2f6; }
.sum > div { background: #fff; border: 1px solid #b0aeb2; margin: 0 2px 0 1px; padding: 4px 3px 0 0; }
.foot { height: 31px; flex: none; border-top: 1px solid #b0aeb2; }
.foot .sum { border-top: 0; height: 30px; padding: 3px 0 4px; }

.center { width: 405px; flex: none; margin: 2px 3px 1px 2px; border: 1px solid #b0aeb2; background: #f5f2f6; display: flex; flex-direction: column; }
.ct { font-size: 14px; line-height: 18px; color: #3f3d41; padding: 9px 0 0 11px; flex: none; height: 27px; }
.tiles { display: flex; gap: 3px; padding: 20px 0 0 13px; flex: none; }
.tile { width: 60px; height: 60px; background: #0072cc; color: #e8f1f8; position: relative; display: flex; flex-direction: column; align-items: center; justify-content: flex-end; padding-bottom: 1px; text-align: center; }
.ti { position: absolute; left: 15px; top: 9px; width: 30px; height: 30px; }
.tb { position: absolute; left: 0; top: -10px; width: 20px; height: 20px; border-radius: 50%; background: #f5251c; color: #fff; font-size: 12px; font-weight: 400; display: flex; align-items: center; justify-content: center; }
.tile-on { outline: 3px solid #fff; outline-offset: 0; }
.fold { position: absolute; right: 0; top: 0; width: 0; height: 0; border-top: 45px solid #000; border-left: 45px solid transparent; }
.tick { position: absolute; right: 6px; top: 7px; width: 16px; height: 12px; }
.tl { left: 10px; top: 6px; width: 34px; height: 34px; }
.links { display: flex; justify-content: space-between; padding: 20px 7px 0 7px; flex: none; height: 39px; }
.links a { color: #0a6fc2; text-decoration: underline; }
.msg { height: 70px; margin: 0 3px 1px; background: #c3c1c4; display: flex; align-items: center; position: relative; flex: none; color: #2b2a2d; }
.m-new { background: #e0dfe1; }
.mi { width: 16px; height: 16px; margin-left: 3px; flex: none; }
.mt { width: 242px; margin-left: 7px; flex: none; }
.md { font: 700 13.500px "Liberation Serif", serif; color: #111; margin-left: 39px; }
.md-n { font: 400 11px "Liberation Sans", sans-serif; color: #333; }
.mx { position: absolute; right: 4px; top: 12px; width: 14px; height: 14px; }
.c-rest { flex: 1; background: #fff; margin: 0 3px 3px; }

.status { height: 23px; flex: none; background: #f5f2f6; border-top: 1px solid #b9b7bb; border-bottom: 2px solid #fff; display: flex; align-items: center; white-space: nowrap; padding-left: 17px; position: relative; }
.st-n { width: 20px; }
.flame { width: 14px; height: 18px; margin-right: 6px; flex: none; }
.st-a { width: 348px; letter-spacing: .18px; }
.st-b { width: 75px; border-right: 1px solid #d5d3d7; height: 19px; line-height: 19px; }
.st-c { width: 114px; padding-left: 7px; border-right: 1px solid #d5d3d7; height: 19px; line-height: 19px; }
.st-d { padding-left: 7px; width: 488px; }
.pin { width: 12px; height: 18px; margin-right: 8px; flex: none; }
.st-e { width: 290px; border-right: 1px solid #d5d3d7; height: 19px; line-height: 19px; }
.st-f { padding-left: 7px; }

.taskbar { height: 43px; flex: none; background: #d4d0c8; display: flex; align-items: center; padding: 0 3px; color: #111; }
.tbb { height: 37px; border: 2px solid; border-color: #fff #6f6c66 #6f6c66 #fff; display: flex; align-items: center; justify-content: center; flex: none; background: #d4d0c8; }
.start { width: 49px; gap: 2px; }
.start b { font-size: 11px; color: #000; }
.win { width: 16px; height: 15px; }
.gripper { width: 2px; height: 34px; background: #a8a59e; border-right: 1px solid #fff; margin: 0 10px 0 8px; flex: none; box-sizing: content-box; }
.qi { width: 48px; display: flex; justify-content: center; flex: none; }
.qi1 { width: 36px; margin-left: 6px; }
.qi2 { width: 56px; justify-content: flex-end; padding-right: 12px; }
.qi svg { width: 32px; height: 32px; }
.app { width: 47px; margin-right: 3px; }
.app svg { width: 31px; height: 31px; }
.on { background: #fff; border-color: #5e5b56 #fff #fff #5e5b56; }
.wtxt { font: 700 22px "Liberation Serif", serif; fill: #1d57a8; }
.tb-fill { flex: 1; }
.g2b { margin: 0 7px 0 0; }
.lang { width: 30px; text-align: left; padding-left: 3px; }
.tray { width: 170px; height: 37px; border: 1px solid #8f8c86; border-right-color: #fff; border-bottom-color: #fff; display: flex; align-items: center; padding-left: 7px; flex: none; }
.tr-a { width: 6px; height: 10px; margin-right: 9px; }
.tr-i { width: 16px; height: 18px; margin-right: 9px; flex: none; }
.clock { width: 50px; text-align: center; line-height: 17px; margin-left: -1px; }
.tr-d { width: 15px; height: 16px; margin-left: 7px; }
```
